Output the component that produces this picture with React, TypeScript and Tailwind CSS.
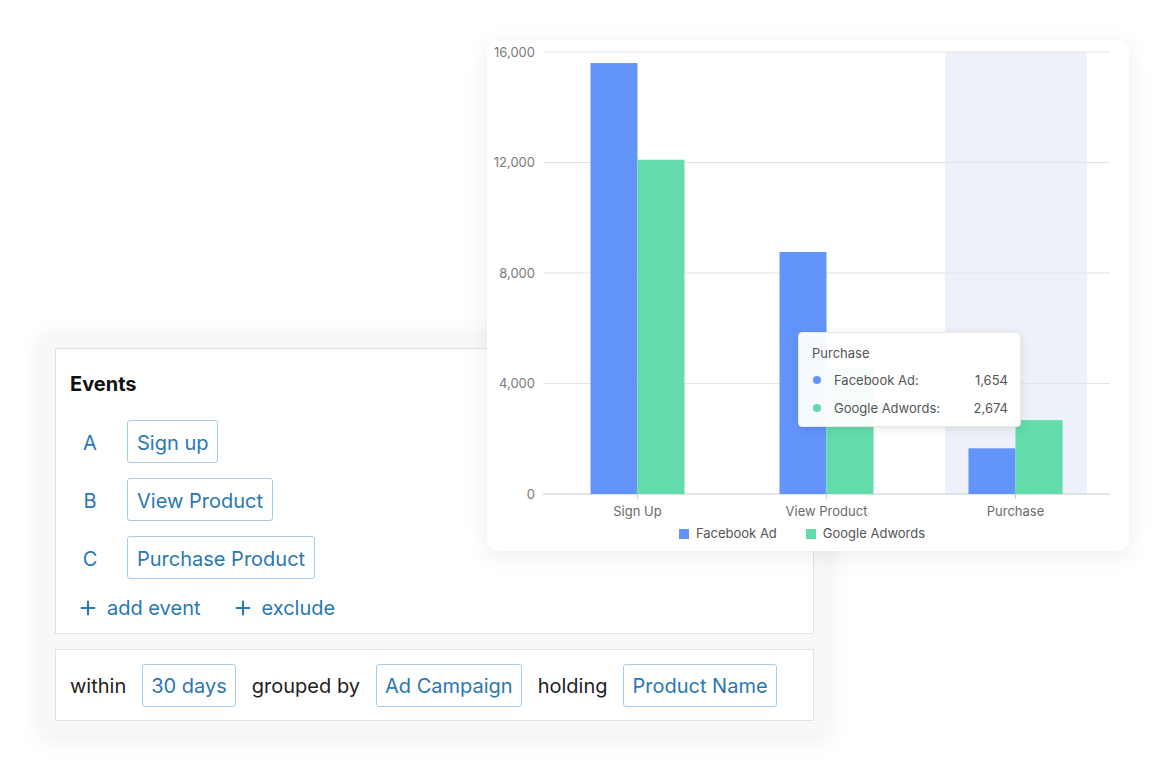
import { Plus } from 'lucide-react'

const blue = '#6394f9'
const green = '#63dbaa'

// plot geometry, in px relative to the chart card
const plotLeft = 56
const plotRight = 623
const baseY = 454
const scale = 442 / 16000
const band = (plotRight - plotLeft) / 3
const barW = 47

const series = [
  { name: 'Sign Up', fb: 15600, ga: 12100 },
  { name: 'View Product', fb: 8760, ga: 4560 },
  { name: 'Purchase', fb: 1654, ga: 2674 },
]

const ticks = [0, 4000, 8000, 12000, 16000]

function EventChip({ label, tight }: { label: string; tight?: boolean }) {
  return (
    <span
      className={
        tight
          ? 'inline-flex h-[43px] items-center rounded-[3px] border border-[#a9cce8] px-[8px] pt-[2px] text-[20px] text-[#2a78b2]'
          : 'inline-flex h-[43px] items-center rounded-[3px] border border-[#a9cce8] px-[9px] pt-[2px] text-[20px] text-[#2a78b2]'
      }
    >
      {label}
    </span>
  )
}

function Chart() {
  return (
    <div className="absolute left-[487px] top-[40px] h-[511px] w-[642px] rounded-[12px] bg-white shadow-[0_4px_24px_rgba(0,0,0,0.08)]">
      <svg width="642" height="480" className="absolute left-0 top-0" style={{ fontFamily: 'Inter, sans-serif' }}>
        {/* hovered category */}
        <rect x={458} y={12} width={142} height={442} fill="#eef1f9" />

        {ticks.map((t) => {
          const y = baseY - t * scale
          return (
            <g key={t}>
              <line x1={plotLeft} x2={plotRight} y1={y} y2={y} stroke={t === 0 ? '#c9c9cf' : '#e4e4e7'} strokeWidth={1} />
              <text x={48} y={y + 4.5} textAnchor="end" fontSize={13} fill="#7a7a7a">
                {t.toLocaleString('en-US')}
              </text>
            </g>
          )
        })}

        {series.map((s, i) => {
          const cx = plotLeft + band * i + band / 2
          const hFb = s.fb * scale
          const hGa = s.ga * scale
          return (
            <g key={s.name}>
              <rect x={cx - barW} y={baseY - hFb} width={barW} height={hFb} fill={blue} />
              <rect x={cx} y={baseY - hGa} width={barW} height={hGa} fill={green} />
              <line x1={cx} x2={cx} y1={baseY} y2={baseY + 5} stroke="#c9c9cf" />
              <text x={cx} y={baseY + 22} textAnchor="middle" fontSize={13} fill="#6b6b6b">
                {s.name}
              </text>
            </g>
          )
        })}
      </svg>

      {/* legend */}
      <div className="absolute left-0 top-[484px] flex w-full justify-center gap-[29px] pr-[12px] font-['Inter',sans-serif] text-[13px] text-[#555]">
        <div className="flex items-center gap-[7px]">
          <span className="h-[10px] w-[10px] bg-[#6394f9]" />
          Facebook Ad
        </div>
        <div className="flex items-center gap-[7px]">
          <span className="h-[10px] w-[10px] bg-[#63dbaa]" />
          Google Adwords
        </div>
      </div>

      {/* tooltip */}
      <div className="absolute left-[311px] top-[292px] flex h-[95px] w-[223px] flex-col rounded-[4px] border border-[#e8e8e8] bg-white/95 pl-[13px] pr-[12px] pt-[11px] font-['Inter',sans-serif] text-[13px] text-[#555] shadow-[0_2px_10px_rgba(0,0,0,0.1)]">
        <div className="h-[18px] leading-[18px]">Purchase</div>
        <div className="mt-[9px] flex h-[18px] items-center leading-[18px]">
          <span className="ml-[1px] h-[8px] w-[8px] rounded-full bg-[#6394f9]" />
          <span className="ml-[13px] flex-1">Facebook Ad:</span>
          <span>1,654</span>
        </div>
        <div className="mt-[10px] flex h-[18px] items-center leading-[18px]">
          <span className="ml-[1px] h-[8px] w-[8px] rounded-full bg-[#63dbaa]" />
          <span className="ml-[13px] flex-1">Google Adwords:</span>
          <span>2,674</span>
        </div>
      </div>
    </div>
  )
}

function Events() {
  const rows = [
    { key: 'A', label: 'Sign up' },
    { key: 'B', label: 'View Product' },
    { key: 'C', label: 'Purchase Product' },
  ]
  return (
    <div className="absolute left-[40px] top-[333px] flex h-[403px] w-[789px] flex-col gap-[15px] rounded-[8px] bg-[#f8f8f8] p-[15px] font-['Inter',sans-serif] shadow-[0_4px_24px_rgba(0,0,0,0.07)]">
      <div className="flex h-[286px] flex-col border border-[#e2e2e2] bg-white px-[14px] pt-[23px]">
        <h2 className="h-[24px] text-[20px] font-bold leading-[24px] text-[#111]">Events</h2>
        <div className="mt-[24px] flex flex-col gap-[15px]">
          {rows.map((r) => (
            <div key={r.key} className="flex items-center">
              <span className="w-[40px] pt-[2px] text-center text-[20px] text-[#2a78b2]">{r.key}</span>
              <span className="ml-[17px]">
                <EventChip label={r.label} />
              </span>
            </div>
          ))}
        </div>
        <div className="mt-[16px] flex h-[24px] items-center gap-[31px] pl-[7px] pt-[2px] text-[20px] text-[#2a78b2]">
          <span className="flex items-center gap-[8px]">
            <Plus size={22} strokeWidth={2.3} />
            add event
          </span>
          <span className="flex items-center gap-[8px]">
            <Plus size={22} strokeWidth={2.3} />
            exclude
          </span>
        </div>
      </div>
      <div className="flex h-[72px] items-center gap-4 border border-[#e2e2e2] bg-white px-[14px] text-[20px] text-[#222]">
        <span className="pt-[2px]">within</span>
        <EventChip label="30 days" tight />
        <span className="pt-[2px]">grouped by</span>
        <EventChip label="Ad Campaign" tight />
        <span className="pt-[2px]">holding</span>
        <EventChip label="Product Name" tight />
      </div>
    </div>
  )
}

export default function App() {
  return (
    <div className="relative h-[777px] w-[1169px] overflow-hidden bg-white">
      <Events />
      <Chart />
    </div>
  )
}
